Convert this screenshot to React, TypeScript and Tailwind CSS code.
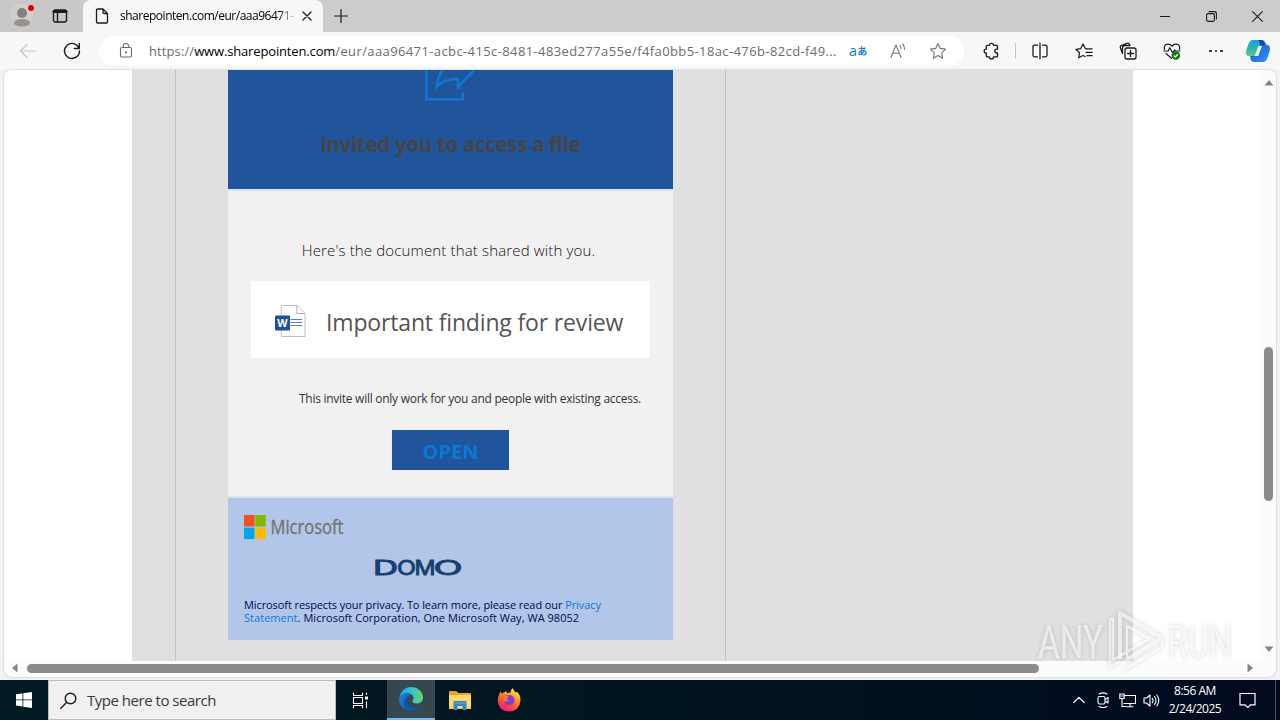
import { ReactNode } from 'react';
import clsx from 'clsx';

interface CellProps {
	className?: string;
	children?: ReactNode;
}

function Cell({ className, children }: CellProps) {
	return (
		<div className={clsx('flex h-full shrink-0 items-center justify-center', className)}>
			{children}
		</div>
	);
}

interface IconProps {
	size?: number;
	stroke?: string;
	width?: number;
	children: ReactNode;
}

function Icon({ size = 18, stroke = '#1b1b1b', width = 1.2, children }: IconProps) {
	return (
		<svg
			width={size}
			height={size}
			viewBox={`0 0 ${size} ${size}`}
			fill="none"
			stroke={stroke}
			strokeWidth={width}
			strokeLinecap="round"
			strokeLinejoin="round"
			className="block shrink-0"
		>
			{children}
		</svg>
	);
}

function TabStrip() {
	return (
		<div className="flex h-8 shrink-0 bg-[#cccccc]">
			<div className="flex w-[83px] shrink-0 items-center rounded-br-md bg-[#c8c8c8]">
				<Cell className="w-11">
					<svg width="26" height="26" viewBox="0 0 26 26" className="block">
						<circle cx="13" cy="12" r="11.5" fill="#d2cfcd" />
						<circle cx="13" cy="10" r="5" fill="#857f7b" />
						<ellipse cx="13" cy="19.7" rx="8" ry="3.8" fill="#98928e" />
						<circle cx="22" cy="5" r="3" fill="#e3000b" />
					</svg>
				</Cell>
				<Cell className="w-8">
					<Icon size={16} width={1.4}>
						<rect x="1.5" y="2" width="13" height="12" rx="2" />
						<path d="M2 3.5h12" strokeWidth="3" />
						<path d="M5.5 3v11" />
					</Icon>
				</Cell>
			</div>
			<div className="flex w-60 shrink-0 items-center rounded-t-lg bg-[#f7f7f7]">
				<Cell className="w-[37px]">
					<Icon size={16} width={1.3}>
						<path d="M2.5 2.2Q2.5 1 3.7 1H9l4.5 4.5v8.3q0 1.2-1.2 1.2H3.7q-1.2 0-1.2-1.2zM9 1v3.3q0 1.2 1.2 1.2h3.3" />
					</Icon>
				</Cell>
				<div className="w-[176px] bg-linear-to-r from-black from-90% to-transparent bg-clip-text text-[12px] tracking-[-0.48px] whitespace-nowrap text-transparent">
					sharepointen.com/eur/aaa96471-
				</div>
				<Cell className="w-[22px]">
					<Icon size={10} width={1.3}>
						<path d="M1 1l8 8M9 1l-8 8" />
					</Icon>
				</Cell>
			</div>
			<div className="flex flex-1 items-center rounded-bl-md">
				<Cell className="w-[35px]">
					<Icon size={14} width={1.2}>
						<path d="M7 .6v12.8M.6 7h12.8" />
					</Icon>
				</Cell>
				<div className="flex-1" />
				<Cell className="w-[46px]">
					<Icon size={10} width={1}>
						<path d="M0 5.5h10" />
					</Icon>
				</Cell>
				<Cell className="w-[46px]">
					<Icon size={11} width={1.1}>
						<rect x=".6" y="2.6" width="7.8" height="7.8" rx="1.6" />
						<path d="M3 .6h5.2q2.2 0 2.2 2.2V8" />
					</Icon>
				</Cell>
				<Cell className="w-[46px]">
					<Icon size={11} width={1.1}>
						<path d="M.6.6l9.8 9.8M10.4.6L.6 10.4" />
					</Icon>
				</Cell>
			</div>
		</div>
	);
}

function CopilotLogo() {
	return (
		<svg width="26" height="24" viewBox="0 0 26 24" className="block">
			<defs>
				<linearGradient id="copA" x1="0" y1="0" x2="0" y2="1">
					<stop offset="0" stopColor="#1b9bf0" />
					<stop offset=".55" stopColor="#2bb9b0" />
					<stop offset="1" stopColor="#63c67a" />
				</linearGradient>
				<linearGradient id="copB" x1="0" y1="0" x2="1" y2="1">
					<stop offset="0" stopColor="#1a54cf" />
					<stop offset="1" stopColor="#2b9bf5" />
				</linearGradient>
			</defs>
			<path d="M8 1h9q2.500 0 3.300 2.500L22 6h-4q-2 0-2.700 2.200L13 15q-.8 2-2.800 2H4Q1 17 1 13.500 1 11 3.500 5 5 1 8 1z" fill="url(#copA)" />
			<path d="M16 1q3 0 3.600 2.500L20.400 7H17q-1.500 0-2-1.500L14 2q-.3-.7-1-1z" fill="#1643a8" />
			<path d="M18 23H9q-2.500 0-3.300-2.500L5 17h5q2 0 2.700-2.200L15 8q.8-2 2.800-2H22q3 0 3 3.500 0 2.500-2.500 9Q21 23 18 23z" fill="url(#copB)" />
			<path d="M13.500 7h3.500l-3.800 10H9.700z" fill="#f7f7f7" />
		</svg>
	);
}

function Toolbar() {
	return (
		<div className="flex h-[38px] shrink-0 items-center bg-[#f7f7f7] pl-1.5">
			<Cell className="w-11">
				<Icon size={18} stroke="#c4c4c4">
					<path d="M16.500 9H1.500M8 2.500L1.500 9 8 15.500" />
				</Icon>
			</Cell>
			<Cell className="w-11">
				<Icon size={18} width={1.4}>
					<path d="M16 6.200A7.500 7.500 0 1 0 16.500 9M16.300 1.500v5h-5" />
				</Icon>
			</Cell>
			<div className="ml-[5px] flex h-[30px] w-[865px] shrink-0 items-center rounded-full bg-white pr-1.5">
				<Cell className="w-[50px] pl-1">
					<Icon size={16} stroke="#6b6b6b" width={1.1}>
						<rect x="2.500" y="4.500" width="11" height="9.500" rx="1.500" />
						<path d="M5.300 4.500V3.200a2.700 2.700 0 0 1 5.400 0v1.300" />
						<circle cx="8" cy="9.400" r=".5" fill="#6b6b6b" />
					</Icon>
				</Cell>
				<div className="flex-1 pt-px text-[13px] whitespace-nowrap text-[#6c6c6c]">
					<span className="tracking-[0.1px]">https://</span>
					<span className="tracking-[-0.15px] text-black">www.sharepointen.com</span>
					<span className="tracking-[0.39px]">
						/eur/aaa96471-acbc-415c-8481-483ed277a55e/f4fa0bb5-18ac-476b-82cd-f49...
					</span>
				</div>
				<Cell className="w-10 text-[#1a7fd4]">
					<span className="-mt-0.5 text-[15px]">a</span>
					<span className="-mt-0.5 font-['Noto_Sans_CJK_JP',sans-serif] text-[10px] font-bold">あ</span>
				</Cell>
				<Cell className="w-10">
					<Icon size={18} stroke="#747474" width={1.1}>
						<path d="M2 15.500L7 3l5 12.500M3.700 11.200h6.600M10.800 3.400q1.300 1.400 1.200 3.400M13.500 2q2.200 2.200 2 5.400" />
					</Icon>
				</Cell>
				<Cell className="w-10">
					<Icon size={18} stroke="#747474" width={1.1}>
						<path d="M9 1.500l2.300 4.900 5.200.7-3.800 3.700.9 5.400L9 13.600l-4.600 2.600.9-5.400-3.800-3.700 5.200-.7z" />
					</Icon>
				</Cell>
			</div>
			<Cell className="ml-[5px] w-11">
				<Icon size={18} width={1.3}>
					<path d="M7.500 3.300a2 2 0 0 1 4 0h3q1 0 1 1v2.900h-.8a1.900 1.900 0 0 0 0 3.800h.8v2.900q0 1-1 1h-3a2 2 0 0 1-4 0h-2.200q-1 0-1-1V11H4a1.900 1.900 0 0 1 0-3.800h.3V4.300q0-1 1-1z" />
				</Icon>
			</Cell>
			<div className="ml-0.5 h-4 w-px bg-[#c4c4c4]" />
			<Cell className="ml-0.5 w-11">
				<Icon size={18} width={1.3}>
					<path d="M6.500 3.200h-3Q2 3.200 2 4.700v8.600q0 1.500 1.500 1.500h3M11.500 3.200h3q1.500 0 1.500 1.500v8.600q0 1.500-1.500 1.500h-3M9 1.200v15.600" />
				</Icon>
			</Cell>
			<Cell className="w-11">
				<Icon size={18} width={1.2}>
					<path d="M10.500 6.800L8 2 5.800 6.600.9 7.300l3.600 3.500-.8 5L8 13.500l2 1M10.500 6.800h6.700M11 10.300h6.200M12 13.700h5.200" />
				</Icon>
			</Cell>
			<Cell className="w-11">
				<Icon size={18} width={1.3}>
					<rect x="6" y="6" width="11" height="11" rx="2" />
					<path d="M11.500 8.500v6M8.500 11.500h6M3.500 11.500L1.300 5.600Q1 4.300 2.200 3.700L8 1.300q1.500-.4 2.100.7l.5 1.300M3.500 11.500V6q0-2.500 2.500-2.500h5" />
				</Icon>
			</Cell>
			<Cell className="w-11">
				<Icon size={18} width={1.2}>
					<path d="M1.500 7.500Q.5 3 4.300 2.200 7 1.700 9 4.200q2-2.500 4.700-2 3.800.8 2.800 5.300M.8 9h4.400l1.600-3.300 3 5.300 1.800-3.200.8 1.200h4.500M3 11.500l5.500 4.800" />
					<circle cx="12.800" cy="13.500" r="3.700" fill="#107c10" stroke="#107c10" />
					<path d="M11.200 14l1.100 1 2.200-2.500" stroke="#fff" />
				</Icon>
			</Cell>
			<Cell className="w-11 gap-[3px]">
				<span className="size-[2.500px] rounded-full bg-[#1b1b1b]" />
				<span className="size-[2.500px] rounded-full bg-[#1b1b1b]" />
				<span className="size-[2.500px] rounded-full bg-[#1b1b1b]" />
			</Cell>
			<Cell className="w-10">
				<CopilotLogo />
			</Cell>
		</div>
	);
}

function WordIcon() {
	return (
		<svg width="31" height="32" viewBox="0 0 32 32" preserveAspectRatio="none" className="block">
			<path d="M6.500.5H23l8 8v23H6.500z" fill="#fff" stroke="#c5b9c4" />
			<path d="M22.500.5V8.500H31" fill="none" stroke="#b7aab6" />
			<path d="M16 14.500h12M16 17.500h12M16 20.500h12" stroke="#4f82c0" />
			<rect x="0" y="10.500" width="15.500" height="15" rx="1" fill="#1d5299" />
			<text x="7.700" y="22.300" textAnchor="middle" fontSize="11" fontWeight="700" fill="#fff">
				W
			</text>
		</svg>
	);
}

function MicrosoftLogo() {
	return (
		<svg width="120" height="32" viewBox="0 0 120 32" className="block">
			<rect x="0" y="4" width="10.500" height="11.500" fill="#f25022" />
			<rect x="11.200" y="4" width="10.500" height="11.500" fill="#7fba00" />
			<rect x="0" y="16.600" width="10.500" height="11.500" fill="#00a4ef" />
			<rect x="11.200" y="16.600" width="10.500" height="11.500" fill="#ffb900" />
			<text x="26.500" y="22.500" fontSize="19.500" fill="#737373" stroke="#737373" strokeWidth=".35" textLength="73" lengthAdjust="spacingAndGlyphs">
				Microsoft
			</text>
		</svg>
	);
}

const domoLetters = [
	{ letter: 'D', x: -2, width: 25 },
	{ letter: 'O', x: 22, width: 19 },
	{ letter: 'M', x: 39.5, width: 21 },
	{ letter: 'O', x: 58.5, width: 29 },
];

function DomoLogo() {
	return (
		<svg width="92" height="30" viewBox="-2 -6 92 30" className="block font-['Inter',sans-serif]">
			{domoLetters.map(({ letter, x, width }) => (
				<text
					key={x}
					x={x}
					y="16"
					fontSize="20"
					fontWeight="400"
					fill="#19406f"
					stroke="#19406f"
					strokeWidth=".9"
					textLength={width}
					lengthAdjust="spacingAndGlyphs"
				>
					{letter}
				</text>
			))}
		</svg>
	);
}

function Email() {
	return (
		<div className="flex w-[445px] flex-col">
			<div className="flex h-[119px] flex-col items-center bg-[#21559b]">
				<svg width="54" height="32" viewBox="0 0 54 32" fill="none" stroke="#0f78d4" strokeWidth="2.600" className="block">
					<path d="M2.300 0v29.200h36.500v-6.500" />
					<path d="M21-3Q14 4 13 16.500 20 8.500 34 9v8L50 0" />
				</svg>
				<h1 className="mt-7 text-[20.500px] leading-[28px] font-bold tracking-[-0.3px] text-[#444]">
					invited you to access a file
				</h1>
			</div>
			<div className="flex h-[309px] flex-col items-center border-y-2 border-[#dbe3ef] bg-[#f1f1f1]">
				<p className="mt-[47px] mr-1 text-[15px] leading-6 font-light tracking-[0.15px] text-[#111]">
					Here's the document that shared with you.
				</p>
				<div className="mt-[19px] flex h-[77px] w-[399px] items-center bg-white pt-0.5 pl-6">
					<WordIcon />
					<span className="mt-1 ml-5 text-[23px] tracking-[-0.16px] whitespace-nowrap text-[#555]">
						Important finding for review
					</span>
				</div>
				<p className="mt-8 ml-[39px] text-[12px] leading-[18px] tracking-[-0.27px] whitespace-nowrap text-[#333]">
					This invite will only work for you and people with existing access.
				</p>
				<button
					type="button"
					className="mt-[22px] h-10 w-[117px] bg-[#21559b] pt-[3px] text-[20px] font-bold text-[#0c78d4]"
				>
					OPEN
				</button>
			</div>
			<div className="flex h-[142px] flex-col bg-[#b1c6e9] pt-[13px] pl-4">
				<MicrosoftLogo />
				<div className="mt-2.5 ml-[129px]">
					<DomoLogo />
				</div>
				<p className="mt-[15px] text-[11px] leading-[13px] whitespace-nowrap text-[#00084d]">
					<span className="tracking-[-0.09px]">
						Microsoft respects your privacy. To learn more, please read our{' '}
						<span className="text-[#0f78d4]">Privacy</span>
					</span>
					<br />
					<span className="tracking-[0.04px]">
						<span className="text-[#0f78d4]">Statement</span>. Microsoft Corporation, One Microsoft Way, WA 98052
					</span>
				</p>
			</div>
		</div>
	);
}

function Watermark() {
	return (
		<svg
			width="220"
			height="66"
			viewBox="0 0 220 66"
			className="absolute right-5 bottom-0.5 block font-['Roboto',sans-serif] drop-shadow-[0_0_2px_rgba(0,0,0,0.25)]"
		>
			<text x="2" y="49" fontSize="46" fontWeight="400" fill="#fff" fillOpacity=".6" textLength="65" lengthAdjust="spacingAndGlyphs">
				ANY
			</text>
			<text x="132" y="49" fontSize="46" fontWeight="400" fill="#fff" fillOpacity=".6" textLength="64" lengthAdjust="spacingAndGlyphs">
				RUN
			</text>
			<g fill="none" stroke="#fff" strokeOpacity=".65" strokeWidth="4" strokeLinejoin="round">
				<path d="M84 50V4l42 25-36 22" />
				<path d="M91 48V17l22 13-36 21V10h-3v48l10-6M88 61l38-23v-7" strokeWidth="2.500" />
			</g>
		</svg>
	);
}

function Page() {
	return (
		<div className="relative mx-1 flex h-[607px] shrink-0 flex-col overflow-hidden rounded-lg bg-[#fcfcfc] shadow-[0_0_2px_rgba(0,0,0,0.3)]">
			<div className="flex h-[591px] shrink-0">
				<div className="flex flex-1 bg-white pl-32">
					<div className="flex w-[1001px] bg-[#e0e0e0] pl-[43px]">
						<div className="flex w-[551px] items-start border-x border-[#c2c2c2] pl-[52px]">
							<Email />
						</div>
					</div>
				</div>
				<div className="flex w-[15px] flex-col items-center bg-[#fcfcfc] pt-[10px] pb-[9px]">
					<svg width="10" height="6" viewBox="0 0 10 6" className="block">
						<path d="M5 0l4.500 5.500H.5z" fill="#858585" />
					</svg>
					<div className="mt-[261px] h-[154px] w-[9px] rounded-full bg-[#8b8b8b]" />
					<div className="flex-1" />
					<svg width="10" height="6" viewBox="0 0 10 6" className="block">
						<path d="M5 6L.5.500h9z" fill="#858585" />
					</svg>
				</div>
			</div>
			<div className="flex h-4 items-center pr-[23px] pb-0.5 pl-2">
				<svg width="6" height="10" viewBox="0 0 6 10" className="block">
					<path d="M0 5L5.500.500v9z" fill="#858585" />
				</svg>
				<div className="ml-[9px] h-[9px] w-[1012px] rounded-full bg-[#8b8b8b]" />
				<div className="flex-1" />
				<svg width="6" height="10" viewBox="0 0 6 10" className="block">
					<path d="M6 5L.5.500v9z" fill="#858585" />
				</svg>
			</div>
			<Watermark />
		</div>
	);
}

function EdgeLogo() {
	return (
		<svg width="24" height="24" viewBox="0 0 24 24" className="block">
			<defs>
				<linearGradient id="edgeTop" x1="0" y1=".5" x2="1" y2=".5">
					<stop offset="0" stopColor="#1b9de2" />
					<stop offset=".5" stopColor="#35c1d6" />
					<stop offset="1" stopColor="#62d95c" />
				</linearGradient>
				<linearGradient id="edgeBottom" x1="0" y1="0" x2="1" y2="1">
					<stop offset="0" stopColor="#1689d8" />
					<stop offset="1" stopColor="#0d4f9e" />
				</linearGradient>
			</defs>
			<path d="M.3 11C1 4.500 6 0 12 0c7 0 12 5 12 10.500 0 4-3 6-6.500 6-3 0-4.200-1.300-4.200-2 0-.6 1.300-1.400 1.300-3.200C14.600 8.500 12 6.300 8.500 6.300 4.500 6.300 1.500 8.500.3 11z" fill="url(#edgeTop)" />
			<path d="M.3 11C1.500 7.800 5 6 8.500 6.300c1.500.2 2.700.7 3.700 1.400C9 8 7 11 7.500 14c.6 4.500 5 7.500 9.500 7.200-7 5.300-17 .5-17-9.200z" fill="url(#edgeBottom)" />
			<path d="M10 9.500c-2.500 2-3 6-.4 9 3 3.300 8.500 3 12.900-.3C20 22.500 15.500 24.300 11 24 6 22 3.500 17.500 5 13.500 6 11 8 9.500 10 9.500z" fill="#0d57a8" />
		</svg>
	);
}

function ExplorerIcon() {
	return (
		<svg width="22" height="19" viewBox="0 0 22 19" className="block">
			<path d="M0 1q0-1 1-1h6l2.500 2H21q1 0 1 1v15H0z" fill="#eea22b" />
			<path d="M0 4h22v13.500H0z" fill="#ffd968" />
			<path d="M4.500 19v-8q0-1 1-1h11q1 0 1 1v8h-4v-4h-5v4z" fill="#2f86c9" />
			<path d="M4.500 12h13" stroke="#68b2e3" />
		</svg>
	);
}

function FirefoxLogo() {
	return (
		<svg width="24" height="24" viewBox="0 0 24 24" className="block">
			<defs>
				<linearGradient id="fox" x1=".8" y1="0" x2=".25" y2="1">
					<stop offset="0" stopColor="#fff14a" />
					<stop offset=".35" stopColor="#ff9a1f" />
					<stop offset=".7" stopColor="#ff4a3d" />
					<stop offset="1" stopColor="#e5178a" />
				</linearGradient>
			</defs>
			<path d="M3.500 3q.3 1.500 1.500 2.500Q6.500 4 8 4l1-1.500L10 5l3.500-.5Q13.500 1.500 15.800 0q.5 2.500 3 4.500l1.700-.5Q24 8 23.400 13 22.500 23 12 23.500 1.500 23 .7 13q0-4 1.500-6.500z" fill="url(#fox)" />
			<path d="M7 9q2.500-2.500 6-2 4.500 1 4.500 5.500-.5 4.500-5 4.700-5-.2-5.500-4.200 2 1.500 4 0l1-1.500-3-.2Q7 11 7 9z" fill="#7b3fd6" />
			<path d="M5 6q2.500 0 3.500 2l3.500.4q-.3 1.400-2.700 2-.8 1.600.8 2.200-2 1.200-4.100.2Q5 9.500 5 6z" fill="#ff7a26" />
		</svg>
	);
}

function Taskbar() {
	return (
		<div className="flex h-10 shrink-0 bg-linear-to-r from-[#011a22] via-[#01151f] to-[#020a20]">
			<Cell className="w-12">
				<svg width="16" height="16" viewBox="0 0 16 16" fill="#fff" className="block">
					<path d="M0 2.300L6.500 1.400v6.100H0zM7.300 1.300L16 0v7.500H7.300zM0 8.300h6.500v6.200L0 13.600zM7.300 8.300H16V16l-8.700-1.300z" />
				</svg>
			</Cell>
			<div className="flex w-72 items-center border border-[#bdbdbd] bg-[#f0f0f0] pl-[11px]">
				<Icon size={17} width={1.4}>
					<circle cx="10.500" cy="6.500" r="5.300" />
					<path d="M6.500 10.500L.8 16.300" />
				</Icon>
				<span className="ml-2.5 text-[15px] tracking-[-0.48px] text-[#3a3a3a]">Type here to search</span>
			</div>
			<Cell className="w-[51px] pr-[3px]">
				<Icon size={17} stroke="#fff" width={1.1}>
					<path d="M1.500.8v2.700h9V.8M1.500 16.200v-2.700h9v2.700M1.500 5.500h9v6h-9zM14.500.8v2M14.500 9.500v6.700" strokeLinecap="butt" />
					<rect x="13.500" y="5" width="2" height="2" fill="#fff" />
				</Icon>
			</Cell>
			<Cell className="w-12 border-b-2 border-[#76b9ed] bg-[#35474f]">
				<EdgeLogo />
			</Cell>
			<Cell className="w-[50px]">
				<ExplorerIcon />
			</Cell>
			<Cell className="w-12">
				<FirefoxLogo />
			</Cell>
			<div className="flex-1" />
			<Cell className="w-6">
				<Icon size={12} stroke="#fff">
					<path d="M.8 8.500L6 3.300l5.200 5.200" />
				</Icon>
			</Cell>
			<Cell className="w-6">
				<Icon size={16} stroke="#fff" width={1.1}>
					<rect x="3" y="4.500" width="7" height="7.500" rx="1.500" />
					<path d="M10.500 7.200l2.500-1.700v5.500l-2.500-1.700M4 2Q8-.3 12 2M4 14.500q4 2.300 8 0" />
				</Icon>
			</Cell>
			<Cell className="w-6">
				<Icon size={17} stroke="#fff" width={1.1}>
					<path d="M5.500 3.500h11v8H5M11 11.500v3M8 14.800h6M3 7v7.500h4M.8 2h4.400v4.500H.8zM2 4h2" strokeLinejoin="miter" />
				</Icon>
			</Cell>
			<Cell className="w-6">
				<Icon size={17} stroke="#fff" width={1.1}>
					<path d="M1 6v5h2.500L7 14V3L3.500 6zM9.300 6.300q1.500 2.200 0 4.400M11.500 4.500q3 4 0 8M13.800 3q4 5.500 0 11" />
				</Icon>
			</Cell>
			<div className="flex w-16 flex-col items-center justify-center text-[12px] leading-[18px] tracking-[-0.48px] whitespace-nowrap text-white">
				<span>8:56 AM</span>
				<span>2/24/2025</span>
			</div>
			<Cell className="w-10">
				<Icon size={17} stroke="#fff" width={1.2}>
					<path d="M1 1.500h15v11.300h-4.500L8.800 15.500 6 12.800H1z" strokeLinejoin="miter" />
				</Icon>
			</Cell>
			<div className="ml-2 w-[5px] border-l border-[#4a5060]" />
		</div>
	);
}

export default function App() {
	return (
		<div className="flex h-[720px] w-[1280px] flex-col overflow-hidden bg-[#f3f3f3] font-['Open_Sans',sans-serif]">
			<TabStrip />
			<Toolbar />
			<Page />
			<div className="flex-1" />
			<Taskbar />
		</div>
	);
}
